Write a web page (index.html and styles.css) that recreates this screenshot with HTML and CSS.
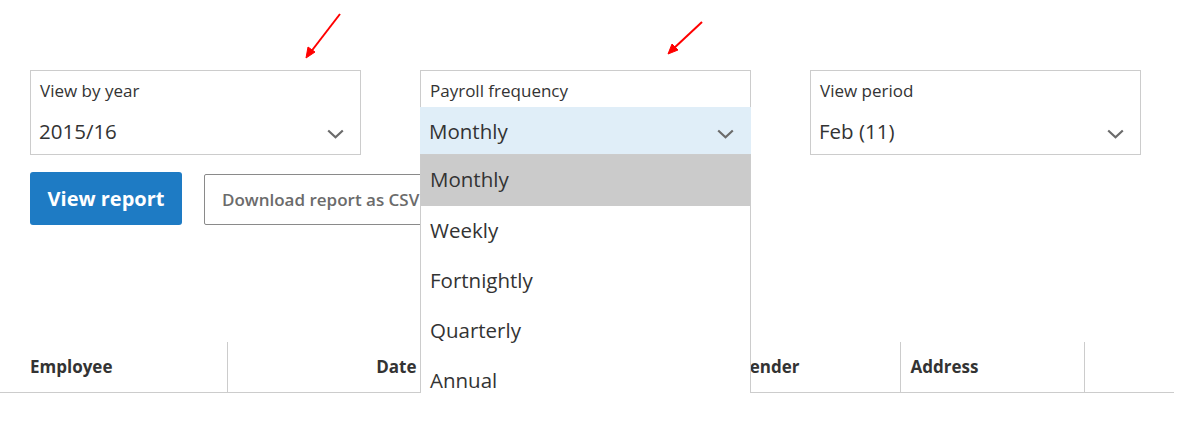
FILE: index.html
```html
<!DOCTYPE html>
<html lang="en">
<head>
  <meta charset="UTF-8">
  <title>Payroll report</title>
  <link rel="stylesheet" href="styles.css">
</head>
<body>

  <div class="page">

    <div class="filters">
      <div class="select">
        <div class="select-label">View by year</div>
        <div class="select-value">
          <span>2015/16</span>
          <svg class="chevron" width="17" height="10" viewBox="0 0 17 10"><path d="M1.2 1.5 L8.5 8.3 L15.8 1.5" fill="none" stroke="#6b6b6b" stroke-width="2.2"/></svg>
        </div>
      </div>

      <div class="select open">
        <div class="select-label">Payroll frequency</div>
        <div class="select-value">
          <span>Monthly</span>
          <svg class="chevron" width="17" height="10" viewBox="0 0 17 10"><path d="M1.2 1.5 L8.5 8.3 L15.8 1.5" fill="none" stroke="#6b6b6b" stroke-width="2.2"/></svg>
        </div>
        <ul class="options">
          <li class="selected">Monthly</li>
          <li>Weekly</li>
          <li>Fortnightly</li>
          <li>Quarterly</li>
          <li>Annual</li>
        </ul>
      </div>

      <div class="select">
        <div class="select-label">View period</div>
        <div class="select-value">
          <span>Feb (11)</span>
          <svg class="chevron" width="17" height="10" viewBox="0 0 17 10"><path d="M1.2 1.5 L8.5 8.3 L15.8 1.5" fill="none" stroke="#6b6b6b" stroke-width="2.2"/></svg>
        </div>
      </div>
    </div>

    <div class="actions">
      <button class="btn-primary">View report</button>
      <button class="btn-outline">Download report as CSV</button>
    </div>

    <table class="report">
      <thead>
        <tr>
          <th class="col-employee">Employee</th>
          <th class="col-date">Date</th>
          <th class="col-freq"></th>
          <th class="col-gender">Gender</th>
          <th class="col-address">Address</th>
          <th class="col-extra"></th>
        </tr>
      </thead>
    </table>

    <!-- annotation arrows -->
    <svg class="arrows" width="1200" height="80" viewBox="0 0 1200 80">
      <g stroke="#f00" stroke-width="2" fill="#f00">
        <line x1="340" y1="14" x2="310" y2="53"/>
        <polygon points="306,58 308,47 315,52" stroke-width="1"/>
        <line x1="702" y1="22" x2="672" y2="50"/>
        <polygon points="668,54 672,44 678,50" stroke-width="1"/>
      </g>
    </svg>

  </div>

</body>
</html>
```

FILE: styles.css
```css
body {
  margin: 0;
  font-family: 'Open Sans', 'Liberation Sans', sans-serif;
  color: #333;
  background: #fff;
}

.page {
  position: relative;
  padding-top: 70px;
}

.filters {
  display: grid;
  grid-template-columns: repeat(3, 331px);
  column-gap: 59px;
  padding-left: 30px;
}

.select {
  position: relative;
  border: 1px solid #ccc;
  height: 83px;
}

.select-label {
  height: 36px;
  padding: 8px 9px 0;
  box-sizing: border-box;
  font-size: 17px;
  line-height: 23px;
  color: #333;
}

.select-value {
  height: 47px;
  padding: 0 16px 0 8px;
  display: flex;
  align-items: center;
  justify-content: space-between;
  font-size: 20.5px;
  color: #333;
}

.select-value .chevron {
  margin-top: 6px;
}

.select.open .select-value {
  background: #e0eef8;
  margin: 0 -1px;
  padding-left: 9px;
  padding-right: 17px;
}

.options {
  position: absolute;
  top: 84px;
  left: -1px;
  right: -1px;
  max-height: 238px;
  overflow: hidden;
  margin: 0;
  padding: 0;
  list-style: none;
  background: #fff;
  border-left: 1px solid #ccc;
  border-right: 1px solid #ccc;
  z-index: 5;
}

.options li {
  height: 50px;
  line-height: 48px;
  padding-left: 9px;
  font-size: 20.5px;
  color: #333;
}

.options li.selected {
  background: #cbcbcb;
  height: 51px;
}

.actions {
  display: flex;
  align-items: flex-start;
  gap: 22px;
  padding-left: 30px;
  margin-top: 17px;
}

.btn-primary {
  width: 152px;
  height: 53px;
  border: none;
  border-radius: 3px;
  background: #1e7bc4;
  color: #fff;
  font-family: inherit;
  font-size: 20px;
  font-weight: 700;
}

.btn-outline {
  margin-top: 2px;
  height: 51px;
  padding: 0 17px;
  border: 1px solid #8a8a8a;
  border-radius: 2px;
  background: #fff;
  color: #6b6b6b;
  font-family: inherit;
  font-size: 17px;
  font-weight: 600;
}

.report {
  margin-top: 117px;
  width: 1174px;
  border-collapse: collapse;
  table-layout: fixed;
}

.report th {
  box-sizing: border-box;
  height: 50px;
  padding: 0 10px;
  border-bottom: 1px solid #ccc;
  border-left: 1px solid #ccc;
  font-size: 17px;
  font-weight: 700;
  text-align: left;
  color: #333;
}

.report th.col-employee {
  width: 227px;
  padding-left: 30px;
  border-left: none;
}

.report th.col-date {
  width: 200px;
  text-align: right;
}

.report th.col-freq {
  width: 300px;
}

.report th.col-gender {
  width: 173px;
}

.report th.col-address {
  width: 184px;
}

.arrows {
  position: absolute;
  top: 0;
  left: 0;
  pointer-events: none;
}
```
